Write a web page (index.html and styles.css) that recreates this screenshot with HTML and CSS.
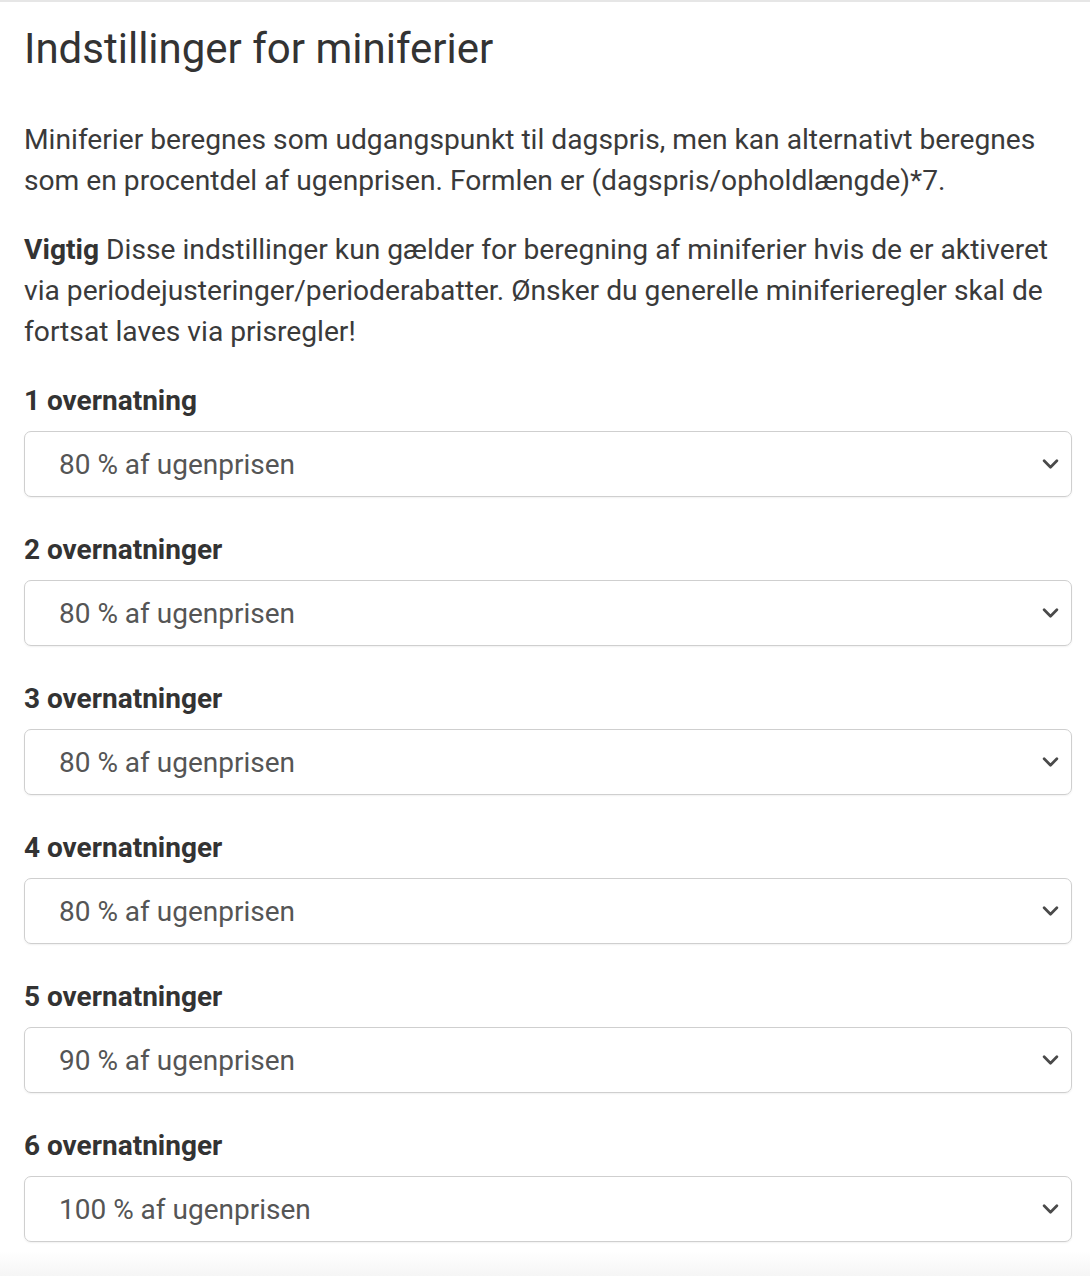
FILE: index.html
```html
<!DOCTYPE html>
<html lang="da">
<head>
<meta charset="utf-8">
<title>Indstillinger for miniferier</title>
<link rel="stylesheet" href="styles.css">
</head>
<body>
<div class="page">
  <h1 class="title">Indstillinger for miniferier</h1>
  <p class="text">Miniferier beregnes som udgangspunkt til dagspris, men kan alternativt beregnes som en procentdel af ugenprisen. Formlen er (dagspris/opholdlængde)*7.</p>
  <p class="text"><strong>Vigtig</strong> Disse indstillinger kun gælder for beregning af miniferier hvis de er aktiveret via periodejusteringer/perioderabatter. Ønsker du generelle miniferieregler skal de fortsat laves via prisregler!</p>

  <div class="field">
    <div class="label">1 overnatning</div>
    <div class="select"><span>80 % af ugenprisen</span><svg class="chev" viewBox="0 0 18 11" width="17" height="10"><path d="M2 2 L9 9 L16 2" fill="none" stroke="#4a4a4a" stroke-width="3" stroke-linecap="round" stroke-linejoin="round"/></svg></div>
  </div>
  <div class="field">
    <div class="label">2 overnatninger</div>
    <div class="select"><span>80 % af ugenprisen</span><svg class="chev" viewBox="0 0 18 11" width="17" height="10"><path d="M2 2 L9 9 L16 2" fill="none" stroke="#4a4a4a" stroke-width="3" stroke-linecap="round" stroke-linejoin="round"/></svg></div>
  </div>
  <div class="field">
    <div class="label">3 overnatninger</div>
    <div class="select"><span>80 % af ugenprisen</span><svg class="chev" viewBox="0 0 18 11" width="17" height="10"><path d="M2 2 L9 9 L16 2" fill="none" stroke="#4a4a4a" stroke-width="3" stroke-linecap="round" stroke-linejoin="round"/></svg></div>
  </div>
  <div class="field">
    <div class="label">4 overnatninger</div>
    <div class="select"><span>80 % af ugenprisen</span><svg class="chev" viewBox="0 0 18 11" width="17" height="10"><path d="M2 2 L9 9 L16 2" fill="none" stroke="#4a4a4a" stroke-width="3" stroke-linecap="round" stroke-linejoin="round"/></svg></div>
  </div>
  <div class="field">
    <div class="label">5 overnatninger</div>
    <div class="select"><span>90 % af ugenprisen</span><svg class="chev" viewBox="0 0 18 11" width="17" height="10"><path d="M2 2 L9 9 L16 2" fill="none" stroke="#4a4a4a" stroke-width="3" stroke-linecap="round" stroke-linejoin="round"/></svg></div>
  </div>
  <div class="field">
    <div class="label">6 overnatninger</div>
    <div class="select"><span>100 % af ugenprisen</span><svg class="chev" viewBox="0 0 18 11" width="17" height="10"><path d="M2 2 L9 9 L16 2" fill="none" stroke="#4a4a4a" stroke-width="3" stroke-linecap="round" stroke-linejoin="round"/></svg></div>
  </div>
</div>
<div class="fade"></div>
</body>
</html>
```

FILE: styles.css
```css
html, body {
  margin: 0;
  padding: 0;
  background: #fff;
}
body {
  font-family: Roboto, "Liberation Sans", Arial, sans-serif;
  color: #333;
  border-top: 2px solid #e6e6e6;
}
.page {
  padding: 0 18px 0 24px;
}
.title {
  margin: 0;
  padding-top: 23px;
  font-size: 42px;
  line-height: 48px;
  font-weight: 400;
  color: #333;
}
.text {
  margin: 46px 0 0;
  font-size: 28.2px;
  line-height: 41px;
  color: #3a3a3a;
}
.text + .text {
  margin-top: 28px;
}
.text strong {
  font-weight: 700;
  color: #333;
}
.field {
  display: flex;
  flex-direction: column;
}
.field .label {
  font-size: 28px;
  line-height: 32px;
  font-weight: 700;
  color: #333;
  margin-top: 33px;
  margin-bottom: 14px;
}
.field + .field .label {
  margin-top: 37px;
}
.select {
  display: flex;
  align-items: center;
  justify-content: space-between;
  height: 64px;
  border: 1px solid #cfcfcf;
  border-radius: 7px;
  padding: 0 12px 0 34px;
  font-size: 28px;
  color: #555;
  box-shadow: 0 1px 2px rgba(0,0,0,0.06);
}
.chev {
  display: block;
}
.fade {
  height: 26px;
  margin-top: 9px;
  background: linear-gradient(#ffffff, #f5f5f5);
}
```
